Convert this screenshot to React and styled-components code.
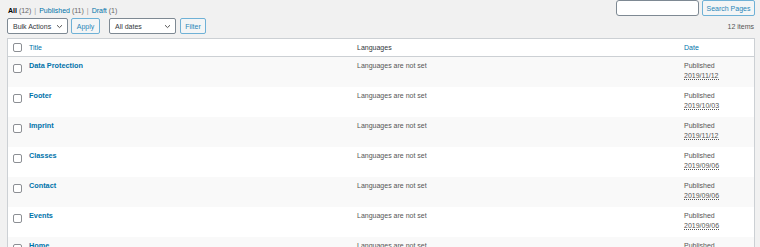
import React from 'react';
import styled, { createGlobalStyle } from 'styled-components';

const Global = createGlobalStyle`
  html, body { margin: 0; padding: 0; }
  body {
    background: #f1f1f1;
    font-family: "Liberation Sans", Arial, sans-serif;
    color: #444;
    overflow: hidden;
  }
`

const Wrap = styled.div`
  padding: 0 5px 0 7px;
  width: 760px;
  box-sizing: border-box;
`

const Top = styled.div`
  display: flex;
  justify-content: space-between;
  height: 38px;
`

const Left = styled.div`
  display: flex;
  flex-direction: column;
`

const Right = styled.div`
  display: flex;
  flex-direction: column;
  align-items: flex-end;
`

const Subsub = styled.div`
  font-size: 7px;
  color: #666;
  margin-top: 5px;
  padding-left: 1px;
  height: 11px;
  line-height: 11px;
  a { color: #0073aa; text-decoration: none; }
  b { color: #000; font-weight: 600; }
  .sep { color: #999; margin: 0 3px; }
`

const Actions = styled.div`
  display: flex;
  align-items: center;
  margin-top: 2px;
`

const Select = styled.div`
  box-sizing: border-box;
  width: ${p => p.w}px;
  height: 16px;
  border: 1px solid #7e8993;
  border-radius: 2px;
  background: #fff;
  font-size: 7px;
  color: #32373c;
  display: flex;
  align-items: center;
  justify-content: space-between;
  padding: 0 4px 0 5px;
  margin-right: ${p => p.mr}px;
`

const Button = styled.div`
  box-sizing: border-box;
  width: ${p => p.w}px;
  height: 16px;
  border: 1px solid #6fb1d6;
  border-radius: 2px;
  background: #f3f5f6;
  color: #2a86b8;
  font-size: 7px;
  display: flex;
  align-items: center;
  justify-content: center;
  margin-right: ${p => p.mr || 0}px;
`

const Search = styled.div`
  display: flex;
  align-items: center;
`

const Input = styled.div`
  box-sizing: border-box;
  width: 83px;
  height: 16px;
  border: 1px solid #7e8993;
  border-radius: 3px;
  background: #fff;
  margin-right: 3px;
`

const Count = styled.div`
  font-size: 7px;
  color: #555;
  margin-top: 7px;
  padding-right: 1px;
`

const Table = styled.div`
  background: #fff;
  border: 1px solid #ccd0d4;
  border-bottom: none;
  display: grid;
  grid-template-columns: 21px 321px 327px 1fr;
`

const HeadCell = styled.div`
  height: 17px;
  border-bottom: 1px solid #ccd0d4;
  display: flex;
  align-items: center;
  padding-left: ${p => p.pl || 0}px;
  font-size: 7px;
  color: ${p => (p.link ? '#0073aa' : '#32373c')};
`

const Cell = styled.div`
  height: 30px;
  box-sizing: border-box;
  background: ${p => (p.odd ? '#f9f9f9' : '#fff')};
  padding: ${p => p.pt || 4}px 0 0 ${p => p.pl || 0}px;
  font-size: 7px;
  color: #555;
  line-height: 10px;
`

const TitleLink = styled.a`
  color: #0073aa;
  font-weight: 700;
  font-size: 7.3px;
  text-decoration: none;
`

const Check = styled.span`
  display: block;
  box-sizing: border-box;
  width: 9px;
  height: 9px;
  border: 1px solid #8c8f94;
  border-radius: 2px;
  background: #fff;
  margin-left: 5px;
`

const DateAbbr = styled.span`
  border-bottom: 1px dotted #555;
`

const Chevron = () => (
  <svg width="7" height="5" viewBox="0 0 7 5">
    <path d="M1 1.2 L3.5 3.6 L6 1.2" fill="none" stroke="#555" strokeWidth="1" />
  </svg>
)

const rows = [
  ['Data Protection', '2019/11/12'],
  ['Footer', '2019/10/03'],
  ['Imprint', '2019/11/12'],
  ['Classes', '2019/09/06'],
  ['Contact', '2019/09/06'],
  ['Events', '2019/09/06'],
  ['Home', '2019/09/06'],
]

export default function App() {
  return (
    <Wrap>
      <Global />
      <Top>
        <Left>
          <Subsub>
            <b>All</b> (12)<span className="sep">|</span>
            <a>Published</a> (11)<span className="sep">|</span>
            <a>Draft</a> (1)
          </Subsub>
          <Actions>
            <Select w={61} mr={3}>Bulk Actions <Chevron /></Select>
            <Button w={29} mr={9}>Apply</Button>
            <Select w={67} mr={4}>All dates <Chevron /></Select>
            <Button w={26}>Filter</Button>
          </Actions>
        </Left>
        <Right>
          <Search>
            <Input />
            <Button w={53}>Search Pages</Button>
          </Search>
          <Count>12 items</Count>
        </Right>
      </Top>
      <Table>
        <HeadCell><Check /></HeadCell>
        <HeadCell link>Title</HeadCell>
        <HeadCell pl={7}>Languages</HeadCell>
        <HeadCell pl={7} link>Date</HeadCell>
        {rows.map(([t, d], i) => {
          const odd = i % 2 === 0
          return (
            <React.Fragment key={t}>
              <Cell odd={odd} pt={7}><Check /></Cell>
              <Cell odd={odd}><TitleLink>{t}</TitleLink></Cell>
              <Cell odd={odd} pl={7}>Languages are not set</Cell>
              <Cell odd={odd} pl={7}>Published<br /><DateAbbr>{d}</DateAbbr></Cell>
            </React.Fragment>
          )
        })}
      </Table>
    </Wrap>
  )
}
